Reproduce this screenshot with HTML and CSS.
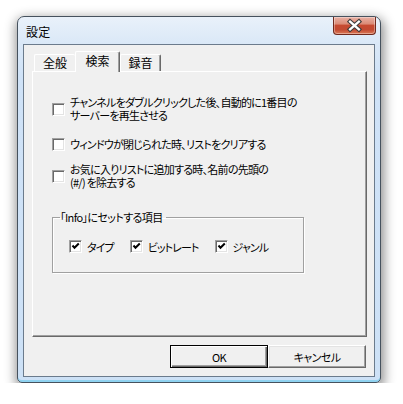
FILE: index.html
```html
<!DOCTYPE html>
<html lang="ja">
<head>
<meta charset="utf-8">
<title>設定</title>
<link rel="stylesheet" href="styles.css">
</head>
<body>
<div class="stage">
  <div class="window">
    <div class="titlebar">
      <span class="title">設定</span>
      <div class="close">
        <svg width="43" height="18" viewBox="0 0 43 18">
          <path d="M17.5 5.5 L26.5 13.5 M26.5 5.5 L17.5 13.5" stroke="#3b3b3b" stroke-width="4.6" stroke-linecap="square" fill="none"/>
          <path d="M17.5 5.5 L26.5 13.5 M26.5 5.5 L17.5 13.5" stroke="#ffffff" stroke-width="2.4" stroke-linecap="square" fill="none"/>
        </svg>
      </div>
    </div>
    <div class="client">
      <div class="tabs">
        <div class="tab first">全般</div>
        <div class="tab active">検索</div>
        <div class="tab">録音</div>
      </div>
      <div class="panel">
        <div class="opt r1">
          <span class="cb"></span>
          <span class="lbl">チャンネルをダブルクリックした後、自動的に1番目の<br>サーバーを再生させる</span>
        </div>
        <div class="opt r2">
          <span class="cb"></span>
          <span class="lbl">ウィンドウが閉じられた時、リストをクリアする</span>
        </div>
        <div class="opt r3">
          <span class="cb"></span>
          <span class="lbl">お気に入りリストに追加する時、名前の先頭の<br>(#/) を除去する</span>
        </div>
        <fieldset class="group">
          <legend>「Info」にセットする項目</legend>
          <div class="items">
            <div class="item"><span class="cb"><svg width="9" height="9" viewBox="0 0 9 9"><path d="M1.5 3.5 L3.5 5.8 L7.8 1.5" stroke="#000" stroke-width="2" fill="none"/></svg></span><span>タイプ</span></div>
            <div class="item"><span class="cb"><svg width="9" height="9" viewBox="0 0 9 9"><path d="M1.5 3.5 L3.5 5.8 L7.8 1.5" stroke="#000" stroke-width="2" fill="none"/></svg></span><span>ビットレート</span></div>
            <div class="item"><span class="cb"><svg width="9" height="9" viewBox="0 0 9 9"><path d="M1.5 3.5 L3.5 5.8 L7.8 1.5" stroke="#000" stroke-width="2" fill="none"/></svg></span><span>ジャンル</span></div>
          </div>
        </fieldset>
      </div>
      <div class="buttons">
        <button class="btn default">OK</button>
        <button class="btn">キャンセル</button>
      </div>
    </div>
  </div>
</div>
</body>
</html>
```
FILE: styles.css
```css
html, body {
  margin: 0;
  padding: 0;
  background: #ffffff;
}

body {
  font-family: "Noto Sans CJK JP", "Noto Sans", sans-serif;
  font-size: 12px;
  line-height: 12px;
  color: #000;
  font-feature-settings: "palt";
}

.stage {
  padding: 16px 0 0 17px;
}

.window {
  width: 364px;
  height: 367px;
  box-sizing: border-box;
  border: 1px solid #46525e;
  border-radius: 7px 7px 5px 5px;
  background: linear-gradient(to bottom, #e9f1fa 0px, #dae8f7 27px, #cfe2f7 60px, #cde1f6 100%);
  box-shadow: 1px 4px 12px 2px rgba(0, 0, 0, 0.45), inset 0 -2px 0 #8fd2f0;
  display: flex;
  flex-direction: column;
  padding: 0 5px 5px;
}

.titlebar {
  height: 27px;
  display: flex;
  align-items: flex-start;
}

.title {
  padding: 8px 0 0 3px;
  font-size: 12px;
  line-height: 14px;
  letter-spacing: 0.2px;
}

.close {
  margin-left: auto;
  width: 43px;
  height: 18px;
  box-sizing: border-box;
  border: 1px solid #70291d;
  border-top: none;
  border-radius: 0 0 4px 4px;
  background: linear-gradient(to bottom, #e9b1a4 0%, #db8c78 40%, #c64a31 50%, #c24a32 75%, #dc7a57 100%);
  box-shadow: inset 0 0 0 1px rgba(255, 255, 255, 0.35);
  display: flex;
  margin-right: -1px;
}

.close svg {
  display: block;
  margin-left: -1px;
  margin-top: -1px;
}

.client {
  flex: 1;
  border: 1px solid #6b7b8c;
  background: #f0f0f0;
  display: flex;
  flex-direction: column;
  padding: 6px 7px 0 8px;
}

.tabs {
  height: 20px;
  display: flex;
  align-items: flex-end;
  padding-left: 2px;
  position: relative;
  z-index: 1;
}

.tab {
  width: 41px;
  height: 17px;
  box-sizing: border-box;
  border-top: 1px solid #ffffff;
  border-left: 1px solid #ffffff;
  border-right: 1px solid #696969;
  box-shadow: inset -1px 0 0 #a0a0a0;
  border-radius: 2px 2px 0 0;
  text-align: center;
  line-height: 14px;
  padding-top: 1px;
}

.tab.first {
  border-right: none;
  box-shadow: none;
}

.tab.active {
  width: 45px;
  height: 21px;
  margin-bottom: -1px;
  background: #f0f0f0;
  padding-top: 2px;
}

.panel {
  height: 266px;
  box-sizing: border-box;
  border-top: 1px solid #ffffff;
  border-left: 1px solid #ffffff;
  border-right: 1px solid #696969;
  border-bottom: 1px solid #696969;
  box-shadow: inset -1px -1px 0 #a0a0a0;
  padding: 0 0 0 19px;
  display: flex;
  flex-direction: column;
  align-items: flex-start;
}

.opt {
  display: flex;
  align-items: center;
  gap: 5px;
  font-size: 11px;
  letter-spacing: -0.75px;
}

.opt .lbl {
  line-height: 13px;
}

.r1 { margin-top: 24px; }
.r2 { margin-top: 16px; }
.r3 { margin-top: 12px; }

.cb {
  width: 13px;
  height: 13px;
  box-sizing: border-box;
  flex: none;
  background: #ffffff;
  border: 1px solid;
  border-color: #a0a0a0 #ffffff #ffffff #a0a0a0;
  box-shadow: inset 1px 1px 0 #696969, inset -1px -1px 0 #e3e3e3;
  display: flex;
  align-items: center;
  justify-content: center;
}

.cb svg {
  display: block;
}

.group {
  margin: 22px 0 0 0;
  width: 252px;
  box-sizing: border-box;
  border: 1px solid #a0a0a0;
  box-shadow: 1px 1px 0 #ffffff, inset 1px 1px 0 #ffffff;
  padding: 0 0 19px 16px;
  min-width: 0;
}

.group legend {
  margin-left: -9px;
  padding: 0 3px 0 0;
  line-height: 12px;
  font-size: 11px;
  letter-spacing: -0.6px;
}

.items {
  display: flex;
  margin-top: 17px;
  gap: 16px;
}

.item {
  display: flex;
  align-items: center;
  gap: 5px;
  font-size: 11px;
  letter-spacing: -0.9px;
}

.buttons {
  margin-top: 8px;
  display: flex;
  justify-content: flex-end;
  padding-right: 1px;
}

.btn {
  width: 98px;
  height: 23px;
  box-sizing: border-box;
  margin: 0;
  padding: 0;
  font: inherit;
  font-size: 11px;
  color: #000;
  background: #f0f0f0;
  border: 1px solid;
  border-color: #ffffff #696969 #696969 #ffffff;
  box-shadow: inset -1px -1px 0 #a0a0a0, inset 1px 1px 0 #e3e3e3;
  border-radius: 0;
  letter-spacing: -0.6px;
}

.btn.default {
  border: 1px solid #000000;
  box-shadow: inset 1px 1px 0 #ffffff, inset -1px -1px 0 #696969, inset -2px -2px 0 #a0a0a0;
}
```
